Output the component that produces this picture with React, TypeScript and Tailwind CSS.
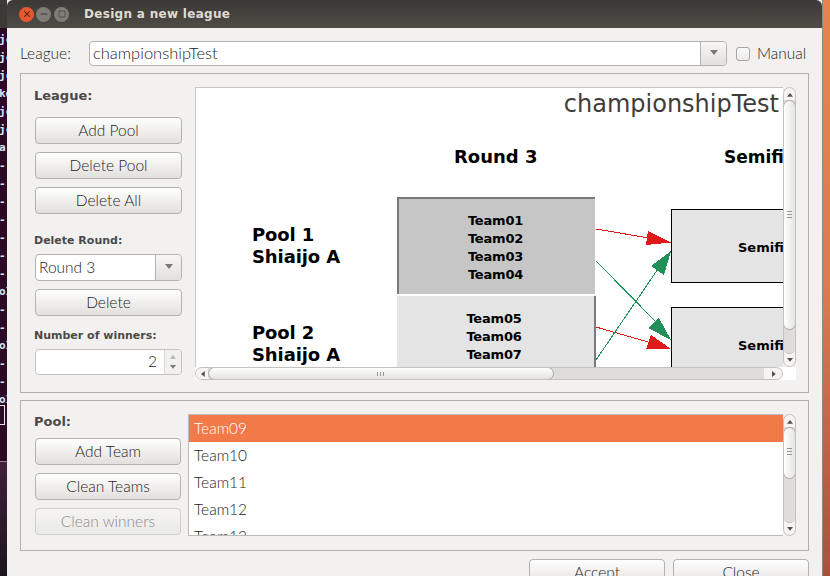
import type { ReactNode } from 'react'
import { Minus, Square, X } from 'lucide-react'

const uiFont = "font-['Lato','Noto_Sans',sans-serif] font-light"
const boldFont = "font-['DejaVu_Sans',sans-serif] font-bold"

const terminalRows = ['jc', 'jc', 'jc', 'ke', 'jc', 'jc', 'a', '- -', '- -', '- -', '- -', '- -', '- -', '- -', 'oI', '- -', '- -', 'oI', '- -', '- -', 'oI']

function Btn({ label, disabled, className = '' }: { label: string; disabled?: boolean; className?: string }) {
  return (
    <div
      className={`flex items-center justify-center rounded-[4px] border bg-linear-to-b ${
        disabled
          ? 'border-[#d0cecb] from-[#f5f4f3] to-[#eaeae8] text-[#8e8c89]'
          : 'border-[#b4b2ae] from-white to-[#e2e0dd] text-[#1f1d1b]'
      } ${uiFont} text-[15.5px] ${className}`}
    >
      {label}
    </div>
  )
}

function Triangle({ dir = 'down', className = '' }: { dir?: 'up' | 'down' | 'left' | 'right'; className?: string }) {
  const points = {
    up: '0,5 4,0 8,5',
    down: '0,0 8,0 4,5',
    left: '5,0 5,8 0,4',
    right: '0,0 0,8 5,4',
  }[dir]
  return (
    <svg viewBox="0 0 8 8" className={`h-[6px] w-[6px] ${className}`}>
      <polygon points={points} fill="currentColor" />
    </svg>
  )
}

function VScrollbar({ thumbH, grip }: { thumbH: number; grip: number }) {
  return (
    <div className="relative h-full w-[13px] overflow-hidden rounded-full border border-[#c4c2be] bg-[#f5f4f3]">
      <div className="flex h-[12px] items-center justify-center text-[#55524e]">
        <Triangle dir="up" className="mt-[3px]" />
      </div>
      <div className="absolute bottom-[12px] left-0 right-0 top-[12px] rounded-b-full border-b border-[#c4c2be] bg-[#dfddda]" />
      <div
        className="absolute left-[-1px] right-[-1px] top-[12px] rounded-full border border-[#aaa8a4] bg-linear-to-r from-white to-[#e6e4e2]"
        style={{ height: thumbH }}
      >
        <div className="absolute left-[3px] flex w-[5px] flex-col gap-[2px]" style={{ top: grip }}>
          <div className="h-px bg-[#9a9894]" />
          <div className="h-px bg-[#9a9894]" />
          <div className="h-px bg-[#9a9894]" />
        </div>
      </div>
      <div className="absolute bottom-0 left-0 right-0 flex h-[12px] items-center justify-center text-[#55524e]">
        <Triangle dir="down" className="mt-[2px]" />
      </div>
    </div>
  )
}

function HScrollbar() {
  return (
    <div className="relative h-[13px] w-full overflow-hidden rounded-full border border-[#c4c2be] bg-[#dfddda]">
      <div className="absolute left-0 top-0 flex h-full w-[12px] items-center justify-center bg-[#f5f4f3] text-[#55524e]">
        <Triangle dir="left" className="ml-[3px]" />
      </div>
      <div className="absolute right-0 top-0 flex h-full w-[18px] items-center justify-center rounded-r-full bg-[#f5f4f3] text-[#55524e]">
        <Triangle dir="right" className="ml-[4px]" />
      </div>
      <div className="absolute bottom-[-1px] left-[12px] top-[-1px] w-[346px] rounded-full border border-[#aaa8a4] bg-linear-to-b from-white to-[#e4e2e0]">
        <div className="absolute left-[168px] top-[4px] flex h-[4px] gap-[2px]">
          <div className="w-px bg-[#9a9894]" />
          <div className="w-px bg-[#9a9894]" />
          <div className="w-px bg-[#9a9894]" />
        </div>
      </div>
    </div>
  )
}

function Combo({ text, className = '', textClass = '' }: { text: string; className?: string; textClass?: string }) {
  return (
    <div className={`flex rounded-[4px] border border-[#b4b2ae] bg-white ${className}`}>
      <div className={`flex flex-1 items-center pl-[3px] ${uiFont} text-[#1f1d1b] ${textClass}`}>{text}</div>
      <div className="flex w-[26px] items-center justify-center rounded-r-[4px] border-l border-[#b4b2ae] bg-linear-to-b from-[#f8f7f6] to-[#e2e0dd] text-[#7a7874]">
        <Triangle className="h-[8px] w-[8px]" />
      </div>
    </div>
  )
}

function Panel({ className = '', children }: { className?: string; children: ReactNode }) {
  return <div className={`flex border border-[#b2b0ac] ${className}`}>{children}</div>
}

function Node({ className, children }: { className: string; children: ReactNode }) {
  return <div className={`absolute flex items-center ${className}`}>{children}</div>
}

function Canvas() {
  return (
    <div className="relative h-[279px] w-[587px] overflow-hidden bg-white">
      <div className="absolute right-[4px] top-0 font-['DejaVu_Sans',sans-serif] text-[24px] leading-[32px] text-[#3f3d3a]">
        championshipTest
      </div>
      <div className={`absolute left-[258px] top-[58px] ${boldFont} text-[18px] leading-[22px] text-black`}>Round 3</div>
      <div className={`absolute left-[528px] top-[58px] ${boldFont} text-[17px] leading-[22px] text-black`}>Semifinal</div>

      <div className={`absolute left-[56px] top-[136px] ${boldFont} text-[18px] leading-[22px] tracking-[-0.1px] text-black`}>
        Pool 1
        <br />
        Shiaijo A
      </div>
      <div className={`absolute left-[56px] top-[234px] ${boldFont} text-[18px] leading-[22px] tracking-[-0.1px] text-black`}>
        Pool 2
        <br />
        Shiaijo A
      </div>

      <Node className="left-[201px] top-[109px] h-[97px] w-[198px] justify-center border-l-2 border-t-2 border-[#7a7a7a] bg-[#c6c6c6] pr-[3px] pt-[3px]">
        <div className={`text-center ${boldFont} text-[13px] leading-[18px] tracking-[-0.2px] text-black`}>
          Team01
          <br />
          Team02
          <br />
          Team03
          <br />
          Team04
        </div>
      </Node>
      <Node className="left-[201px] top-[208px] h-[98px] w-[199px] justify-center border-r-2 border-[#7a7a7a] bg-[#e4e4e4] pr-[3px] pt-[1px]">
        <div className={`text-center ${boldFont} text-[13px] leading-[18px] tracking-[-0.2px] text-black`}>
          Team05
          <br />
          Team06
          <br />
          Team07
          <br />
          Team08
        </div>
      </Node>

      <Node className="left-[475px] top-[121px] h-[74px] w-[200px] border border-black bg-[#e4e4e4] pl-[66px] pt-[3px]">
        <span className={`${boldFont} text-[13px] text-black`}>Semifinal</span>
      </Node>
      <Node className="left-[475px] top-[219px] h-[74px] w-[200px] border border-black bg-[#e4e4e4] pl-[66px] pt-[3px]">
        <span className={`${boldFont} text-[13px] text-black`}>Semifinal</span>
      </Node>

      {/* arrows, coordinates local to the canvas */}
      <svg className="absolute left-0 top-0" width="587" height="279" viewBox="0 0 587 279" shapeRendering="crispEdges">
        <g transform="translate(-196 -88)">
          <line x1="596" y1="229" x2="655" y2="239" stroke="#e01a1a" strokeWidth="1" />
          <polygon points="671,242.5 648,231 646,245" fill="#e01a1a" />
          <line x1="596" y1="261" x2="660" y2="326" stroke="#219058" strokeWidth="1" />
          <polygon points="671,340 659,318 648,328" fill="#219058" />
          <line x1="596" y1="327" x2="655" y2="344" stroke="#e01a1a" strokeWidth="1" />
          <polygon points="671,349 651,335 646,349" fill="#e01a1a" />
          <line x1="596" y1="360" x2="660" y2="266" stroke="#219058" strokeWidth="1" />
          <polygon points="671,251 651,266 664,275" fill="#219058" />
        </g>
      </svg>
    </div>
  )
}

export default function App() {
  return (
    <div className="flex h-[576px] w-[830px] overflow-hidden bg-[#2c0a26]">
      {/* terminal + desktop peeking out on the left */}
      <div className="relative h-full w-[7px] shrink-0 overflow-hidden">
        <div className="h-[28px] bg-[#3b3a36]" />
        <div className="relative flex h-[433px] flex-col bg-[#2c0a26] pt-[3px] font-['DejaVu_Sans_Mono',monospace] text-[11px] font-bold leading-[18px] text-[#d8e4f2]">
          {terminalRows.map((c, i) => (
            <span key={i} className="ml-[-1px] h-[18px] whitespace-pre">
              {c}
            </span>
          ))}
          <div className="absolute left-[-2px] top-[377px] h-[20px] w-[7px] border border-[#e8e4e8]" />
        </div>
        <div className="h-[115px] border-t border-[#8a8088] bg-linear-to-b from-[#3f1f38] to-[#1e1420]" />
      </div>

      {/* dialog */}
      <div className="flex h-full w-[815px] shrink-0 flex-col bg-[#f2f1f0]">
        <div className="flex h-[28px] shrink-0 items-center rounded-t-[6px] bg-linear-to-b from-[#3a3935] to-[#4f4c46] pl-[12px]">
          <div className="flex h-[15px] w-[15px] items-center justify-center rounded-full bg-[#e8582c] text-[#3a2018]">
            <X size={10} strokeWidth={2.5} />
          </div>
          <div className="ml-[2px] flex h-[15px] w-[15px] items-center justify-center rounded-full bg-[#7f7d76] text-[#3c3b37]">
            <Minus size={10} strokeWidth={2.5} />
          </div>
          <div className="ml-[3px] flex h-[15px] w-[15px] items-center justify-center rounded-full bg-[#7f7d76] text-[#3c3b37]">
            <Square size={8} strokeWidth={2} />
          </div>
          <div className={`ml-[15px] ${boldFont} text-[12px] tracking-[0.3px] text-[#dfdbd2]`}>Design a new league</div>
        </div>

        <div className="flex flex-col pl-[13px] pr-[13px]">
          {/* top row */}
          <div className={`mt-[13px] flex h-[25px] items-center ${uiFont} text-[15.5px] text-[#1f1d1b]`}>
            <span className="w-[69px]">League:</span>
            <Combo text="championshipTest" className="h-[25px] w-[638px]" textClass="text-[16.5px]" />
            <div className="ml-[9px] h-[14px] w-[14px] rounded-[3px] border border-[#a8a6a2] bg-linear-to-b from-[#fafafa] to-[#ecebea]" />
            <span className="ml-[7px]">Manual</span>
          </div>

          {/* league panel */}
          <Panel className="mt-[7px] h-[320px] pl-[14px] pt-[13px]">
            <div className="flex w-[147px] flex-col">
              <div className={`ml-[-1px] h-[17px] ${boldFont} text-[13px] leading-[17px] text-[#4c4a47]`}>League:</div>
              <Btn label="Add Pool" className="mt-[13px] h-[27px]" />
              <Btn label="Delete Pool" className="mt-[8px] h-[27px]" />
              <Btn label="Delete All" className="mt-[8px] h-[27px]" />
              <div className={`ml-[-1px] mt-[19px] h-[15px] ${boldFont} text-[11px] leading-[15px] text-[#4c4a47]`}>Delete Round:</div>
              <Combo text="Round 3" className="mt-[6px] h-[27px]" textClass="text-[15.5px]" />
              <Btn label="Delete" className="mt-[8px] h-[27px]" />
              <div className={`ml-[-1px] mt-[12px] h-[15px] ${boldFont} text-[11px] leading-[15px] text-[#4c4a47]`}>Number of winners:</div>
              <div className="mt-[6px] flex h-[26px] rounded-[4px] border border-[#c4c2be] bg-white">
                <div className={`flex flex-1 items-center justify-end pr-[7px] ${uiFont} text-[15.5px] text-[#1f1d1b]`}>2</div>
                <div className="flex w-[17px] flex-col items-center justify-center gap-[4px] rounded-r-[4px] border-l border-[#d8d6d3] bg-[#f2f1f0]">
                  <Triangle dir="up" className="mt-[2px] h-[5px] w-[5px] text-[#b4b2ae]" />
                  <Triangle dir="down" className="h-[5px] w-[5px] text-[#7a7874]" />
                </div>
              </div>
            </div>
            <div className="ml-[13px] flex h-[293px] w-[601px] flex-col">
              <div className="flex h-[280px]">
                <div className="border-l border-t border-[#c8c6c2]">
                  <Canvas />
                </div>
                <VScrollbar thumbH={230} grip={110} />
              </div>
              <div className="bg-white pr-[13px]">
                <HScrollbar />
              </div>
            </div>
          </Panel>

          {/* pool panel */}
          <Panel className="mt-[7px] h-[151px] pl-[14px] pt-[13px]">
            <div className="flex w-[146px] flex-col">
              <div className={`ml-[-1px] mt-[-1px] h-[17px] ${boldFont} text-[13px] leading-[17px] text-[#4c4a47]`}>Pool:</div>
              <Btn label="Add Team" className="mt-[8px] h-[27px]" />
              <Btn label="Clean Teams" className="mt-[8px] h-[27px]" />
              <Btn label="Clean winners" disabled className="mt-[8px] h-[27px]" />
            </div>
            <div className="ml-[7px] flex h-[122px]">
              <div className={`h-full w-[595px] overflow-hidden border-b border-l border-t border-[#bdbbb7] bg-white ${uiFont} text-[15.5px] text-[#1f1d1b]`}>
                <div className="flex h-[27px] items-center bg-[#f27a48] pl-[5px] text-white">Team09</div>
                <div className="flex h-[27px] items-center pl-[5px]">Team10</div>
                <div className="flex h-[27px] items-center pl-[5px]">Team11</div>
                <div className="flex h-[27px] items-center pl-[5px]">Team12</div>
                <div className="flex h-[27px] items-center pl-[5px]">Team13</div>
              </div>
              <VScrollbar thumbH={52} grip={20} />
            </div>
          </Panel>

          {/* dialog buttons */}
          <div className="mt-[8px] flex justify-end gap-[8px]">
            <Btn label="Accept" className="h-[27px] w-[136px]" />
            <Btn label="Close" className="h-[27px] w-[136px]" />
          </div>
        </div>
      </div>

      {/* desktop on the right */}
      <div className="h-full w-[8px] shrink-0 border-l border-[#8a8884] bg-linear-to-b from-[#e8834f] via-[#dd7a50] to-[#a8503f]" />
    </div>
  )
}
